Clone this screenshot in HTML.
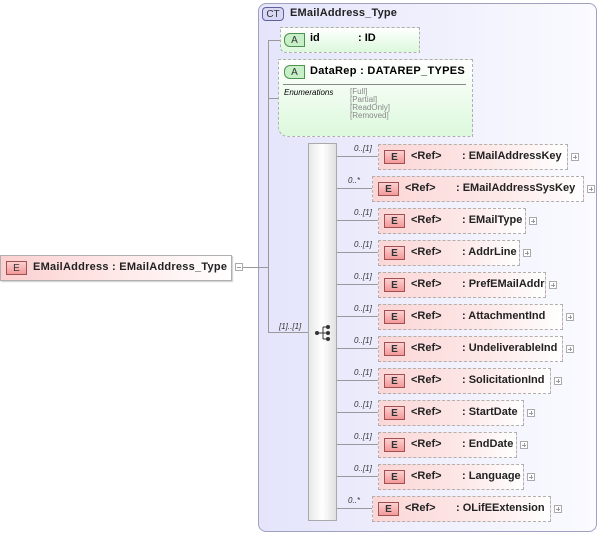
<!DOCTYPE html>
<html><head><style>
body{margin:0;width:601px;height:537px;background:#fff;position:relative;font-family:"Liberation Sans",Arial,sans-serif;overflow:hidden}
.a{position:absolute;white-space:nowrap}
.ct{left:258px;top:3px;width:339px;height:529px;border:1px solid #a0a0c0;border-radius:8px;background:linear-gradient(90deg,#e4e4fb,#f4f4fe 70%,#fafaff);box-sizing:border-box}
.badge{position:absolute;font-size:10px;text-align:center;line-height:13px;box-sizing:border-box}
.eb{width:21px;height:14px;border:1px solid #a05050;background:linear-gradient(#fbd0d0,#f29a9a);color:#333}
.el{position:absolute;height:26px;border:1px dashed #b0b0b0;box-sizing:border-box;background:linear-gradient(90deg,#fcd6d6,#fde8e8 60%,#fff);font-size:11px;font-weight:bold;color:#222;white-space:nowrap}
.el .eb{left:5px;top:5px}
.el .r{position:absolute;left:32px;top:5px}
.el .n{position:absolute;top:5px}
.pl{position:absolute;width:8px;height:8px;border:1px solid #aaa;box-sizing:border-box;background:#fff}
.pl:before{content:"";position:absolute;left:1px;top:3px;width:4px;height:1px;background:#999}
.pl.p:after{content:"";position:absolute;left:3px;top:1px;width:1px;height:4px;background:#999}
.m{position:absolute;font-size:8px;font-style:italic;color:#333;white-space:nowrap}
.ln{position:absolute;background:#999}
</style></head><body>
<div class="a ct"></div>
<div class="badge" style="left:262px;top:7px;width:22px;height:14px;border:1px solid #6060a0;border-radius:4px;background:#d8d8f4;color:#333">CT</div>
<div class="a" style="left:290px;top:7px;font-size:11px;font-weight:bold;color:#222;letter-spacing:0.2px">EMailAddress_Type</div>

<div class="a" style="left:0;top:255px;width:232px;height:26px;border:1px solid #b0b0b0;box-sizing:border-box;background:linear-gradient(90deg,#fcd0d0,#fee8e8 50%,#fff);box-shadow:1px 1px 1px #ccc"></div>
<div class="badge eb" style="left:6px;top:261px">E</div>
<div class="a" style="left:33px;top:261px;font-size:11px;font-weight:bold;color:#222;letter-spacing:0.25px">EMailAddress : EMailAddress_Type</div>
<div class="pl" style="left:235px;top:263px"></div>
<div class="ln" style="left:243px;top:267px;width:25px;height:1px"></div>
<div class="ln" style="left:268px;top:40px;width:1px;height:293px"></div>
<div class="ln" style="left:268px;top:40px;width:16px;height:1px"></div>
<div class="ln" style="left:268px;top:98px;width:12px;height:1px"></div>
<div class="ln" style="left:268px;top:332px;width:40px;height:1px"></div>
<div class="m" style="left:279px;top:322px">[1]..[1]</div>

<div class="a" style="left:280px;top:27px;width:140px;height:26px;border:1px dashed #b0b0b0;box-sizing:border-box;background:linear-gradient(#fff,#dcf8dc);border-radius:0 0 0 6px"></div>
<div class="badge" style="left:284px;top:33px;width:21px;height:14px;border:1px solid #509050;background:#c8f0c8;border-radius:6px 0 0 6px;color:#333">A</div>
<div class="a" style="left:310px;top:32px;font-size:11px;font-weight:bold">id</div>
<div class="a" style="left:358px;top:32px;font-size:11px;font-weight:bold">: ID</div>
<div class="a" style="left:278px;top:59px;width:195px;height:78px;border:1px dashed #b0b0b0;box-sizing:border-box;background:linear-gradient(#fff,#dcf8dc);border-radius:0 0 0 10px"></div>
<div class="badge" style="left:284px;top:65px;width:21px;height:14px;border:1px solid #509050;background:#c8f0c8;border-radius:6px 0 0 6px;color:#333">A</div>
<div class="a" style="left:310px;top:65px;font-size:11px;font-weight:bold;letter-spacing:0.3px">DataRep : DATAREP_TYPES</div>
<div class="ln" style="left:283px;top:84px;width:183px;height:1px;background:#888"></div>
<div class="a" style="left:284px;top:88px;font-size:8px;font-style:italic">Enumerations</div>
<div class="a" style="left:350px;top:88px;font-size:8px;color:#888;line-height:8px">[Full]<br>[Partial]<br>[ReadOnly]<br>[Removed]</div>

<div class="a" style="left:308px;top:143px;width:29px;height:378px;border:1px solid #aaa;box-sizing:border-box;background:linear-gradient(90deg,#e8e8e8,#fff 50%,#e0e0e0)"></div>
<svg class="a" style="left:314px;top:324px" width="18" height="18"><line x1="2" y1="9" x2="9" y2="9" stroke="#333"/><circle cx="3" cy="9" r="2" fill="#333"/><line x1="9" y1="3" x2="9" y2="15" stroke="#333"/><line x1="9" y1="3" x2="14" y2="3" stroke="#333"/><line x1="9" y1="9" x2="14" y2="9" stroke="#333"/><line x1="9" y1="15" x2="14" y2="15" stroke="#333"/><circle cx="14" cy="3" r="2" fill="#333"/><circle cx="14" cy="9" r="2" fill="#333"/><circle cx="14" cy="15" r="2" fill="#333"/></svg>

<div id="rows"></div>
<script>
var rows=[["0..[1]",378,568,"EMailAddressKey",461],["0..*",372,584,"EMailAddressSysKey",455],["0..[1]",378,526,"EMailType",461],["0..[1]",378,520,"AddrLine",461],["0..[1]",378,546,"PrefEMailAddr",461],["0..[1]",378,563,"AttachmentInd",461],["0..[1]",378,563,"UndeliverableInd",461],["0..[1]",378,551,"SolicitationInd",461],["0..[1]",378,524,"StartDate",461],["0..[1]",378,517,"EndDate",461],["0..[1]",378,524,"Language",461],["0..*",372,551,"OLifEExtension",455]];
var h="";rows.forEach(function(r,i){var c=156+i*32;
h+='<div class="ln" style="left:337px;top:'+c+'px;width:'+(r[1]-337)+'px;height:1px"></div>';
h+='<div class="m" style="left:'+(r[1]-24)+'px;top:'+(c-12)+'px">'+r[0]+'</div>';
h+='<div class="el" style="left:'+r[1]+'px;top:'+(c-12)+'px;width:'+(r[2]-r[1])+'px"><div class="badge eb">E</div><span class="r">&lt;Ref&gt;</span><span class="n" style="left:'+(r[4]-r[1])+'px">: '+r[3]+'</span></div>';
h+='<div class="pl p" style="left:'+(r[2]+3)+'px;top:'+(c-3)+'px"></div>';});
document.getElementById("rows").innerHTML=h;
</script>
</body></html>
